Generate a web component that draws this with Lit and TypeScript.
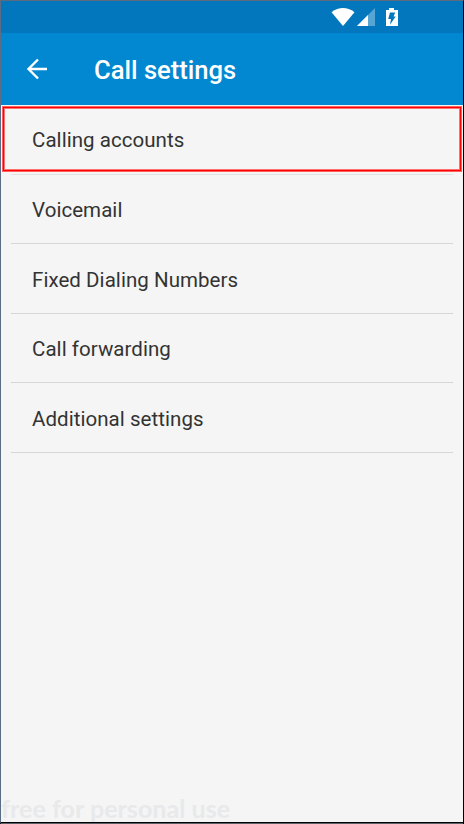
import { LitElement, html, css } from "lit";
import { customElement } from "lit/decorators.js";

@customElement("app-root")
export class AppRoot extends LitElement {
  static styles = css`
    :host { display: block; font-family: Roboto, "Liberation Sans", sans-serif; }
    .screen { box-sizing: border-box; position: relative; width: 464px; height: 824px; display: flex; flex-direction: column;
      background: #f5f5f5; border-style: solid; border-width: 1px 1px 2px; border-color: #5e6b7c #000 #000 #5b6c85; }
    .status { height: 32px; flex: none; background: #0277bd; display: flex; padding-left: 330px; }
    .bar { height: 72px; flex: none; background: #0288d1; display: flex; align-items: center; padding-left: 24px; color: #fff; }
    .back { width: 24px; height: 24px; margin-right: 45px; display: block; }
    h1 { margin: 3px 0 0; font-size: 25.6px; line-height: 31px; font-weight: 500; white-space: nowrap; }
    .list { display: grid; grid-template-rows: 70px 69px 70px 69px 70px; margin: 0 10px; }
    .row { display: flex; align-items: center; padding: 1px 0 0 21px; border-bottom: 1px solid #d5d6d6; color: #333; font-size: 20.5px; letter-spacing: 0.05px; white-space: nowrap; }
    .row:nth-child(3), .row:nth-child(5) { padding-top: 2px; }
    .row.first { border-bottom-color: #e1e2e2; }
    .highlight { position: absolute; left: 1px; top: 105px; width: 460px; height: 66px; box-sizing: border-box; border: 1px solid #ff6060; }
    .highlight::before { content: ""; position: absolute; inset: 0; border: 1px solid #f00; }
    .highlight::after { content: ""; position: absolute; inset: 1px; border: 1px solid #ff7070; }
    .note { margin: auto 0 -1px; font: 700 25.1px/29px Lato, sans-serif; color: #e8e9ea; white-space: nowrap; }
    .edge { position: absolute; bottom: -2px; left: 0; right: 0; height: 1px; background: #5a6068; }
  `;

  private items = ["Calling accounts", "Voicemail", "Fixed Dialing Numbers", "Call forwarding", "Additional settings"];

  render() {
    return html`<div class="screen">
      <div class="status">
        <svg width="70" height="32" viewBox="331 1 70 32">
          <path fill="#fff" d="M331.5 12.2Q343 4 354.5 12.2L343 26Z" />
          <path fill="#56a5d3" d="M357 26L375 8V26Z" />
          <path fill="#fff" d="M357 26L368 15V26Z" />
          <path fill="#fff" d="M389 8h5v2h4v16h-12v-16h3z" />
          <path fill="#0277bd" d="M390 12.5h5.200l-1.700 4h2.200l-5.700 8.200 1-5.700h-2.800z" />
        </svg>
      </div>
      <div class="bar">
        <svg class="back" viewBox="0 0 24 24" fill="none" stroke="#fff" stroke-width="2.4"><path d="M22 12H3.500M13 2.500L3.500 12l9.500 9.500" /></svg>
        <h1>Call settings</h1>
      </div>
      <div class="list">${this.items.map((t, i) => html`<div class="row ${i === 0 ? "first" : ""}">${t}</div>`)}</div>
      <div class="note">free for personal use</div>
      <div class="highlight"></div>
      <div class="edge"></div>
    </div>`;
  }
}
